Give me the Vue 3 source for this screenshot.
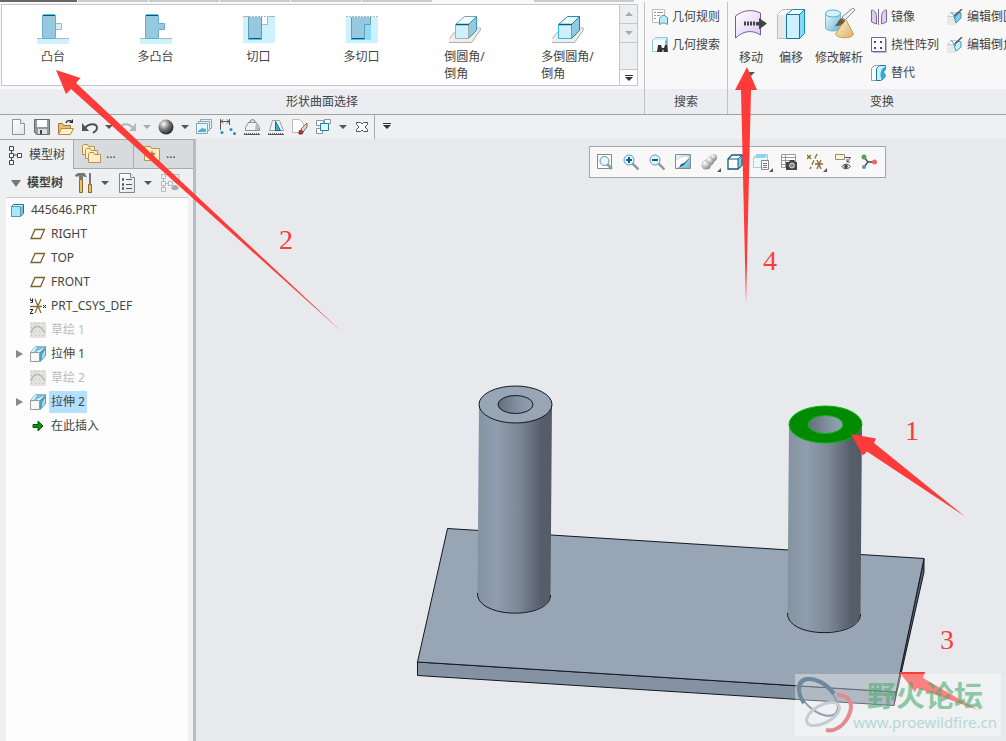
<script setup>
const shapes = [
  { icon: 'boss', lines: ['凸台'] },
  { icon: 'multi-boss', lines: ['多凸台'] },
  { icon: 'cut', lines: ['切口'] },
  { icon: 'multi-cut', lines: ['多切口'] },
  { icon: 'round', lines: ['倒圆角/', '倒角'] },
  { icon: 'multi-round', lines: ['多倒圆角/', '倒角'] },
]
const searches = [
  { icon: 'rule', label: '几何规则' },
  { icon: 'find', label: '几何搜索' },
]
const transforms = [
  { icon: 'move', label: '移动', menu: true, size: 'narrow' },
  { icon: 'offset', label: '偏移', size: 'narrow' },
  { icon: 'analytic', label: '修改解析', size: 'wide' },
]
const patterns = [
  { icon: 'mirror', label: '镜像' },
  { icon: 'flex', label: '挠性阵列' },
  { icon: 'replace', label: '替代' },
]
const edits = [
  { icon: 'edit-round', label: '编辑倒圆角' },
  { icon: 'edit-chamfer', label: '编辑倒角' },
]
const quick = [
  { icon: 'new', name: '新建' },
  { icon: 'save', name: '保存' },
  { icon: 'open', name: '打开' },
  { icon: 'undo', name: '撤销', menu: true },
  { icon: 'redo', name: '重做', menu: true, off: true },
  { icon: 'sphere', name: '外观', menu: true },
  { icon: 'layers', name: '图层' },
  { icon: 'measure', name: '测量' },
  { icon: 'mass', name: '质量' },
  { icon: 'section', name: '截面' },
  { icon: 'erase', name: '拭除' },
  { icon: 'windows', name: '窗口', menu: true },
  { icon: 'close', name: '关闭' },
]
const views = [
  { icon: 'refit', name: '重新调整' },
  { icon: 'zoom-in', name: '放大' },
  { icon: 'zoom-out', name: '缩小' },
  { icon: 'repaint', name: '重画' },
  { icon: 'shade', name: '显示样式', menu: true },
  { icon: 'cube', name: '视图方向' },
  { icon: 'saved', name: '已保存方向', menu: true, spaced: true },
  { icon: 'manager', name: '视图管理器' },
  { icon: 'datum', name: '基准显示', menu: true, spaced: true },
  { icon: 'notes', name: '注释显示' },
  { icon: 'spin', name: '旋转中心' },
]
const tree = [
  { icon: 'plane', label: 'RIGHT' },
  { icon: 'plane', label: 'TOP' },
  { icon: 'plane', label: 'FRONT' },
  { icon: 'csys', label: 'PRT_CSYS_DEF' },
  { icon: 'sketch', label: '草绘 1', off: true },
  { icon: 'extrude', label: '拉伸 1', branch: true },
  { icon: 'sketch', label: '草绘 2', off: true },
  { icon: 'extrude', label: '拉伸 2', branch: true, selected: true },
  { icon: 'insert', label: '在此插入' },
]
</script>

<template>
  <div class="app">
    <svg class="library" aria-hidden="true">
      <defs>
        <linearGradient id="g-sky" x1="0" y1="0" x2="1" y2="1">
          <stop offset="0" stop-color="#f2fcff" /><stop offset="1" stop-color="#62b4d6" />
        </linearGradient>
        <linearGradient id="g-violet" x1="0" y1="0" x2="1" y2="1">
          <stop offset="0" stop-color="#fff" /><stop offset="1" stop-color="#d9c9f0" />
        </linearGradient>
        <linearGradient id="g-sand" x1="0" y1="0" x2="1" y2="1">
          <stop offset="0" stop-color="#fff4d6" /><stop offset="1" stop-color="#dcb163" />
        </linearGradient>
        <linearGradient id="g-paper" x1="0" y1="0" x2="1" y2="1">
          <stop offset="0" stop-color="#fff" /><stop offset="1" stop-color="#dfe5e9" />
        </linearGradient>
        <radialGradient id="g-ball" cx=".35" cy=".3" r=".75">
          <stop offset="0" stop-color="#fff" /><stop offset=".5" stop-color="#777" /><stop offset="1" stop-color="#222" />
        </radialGradient>
        <radialGradient id="g-pale" cx=".35" cy=".3" r=".75">
          <stop offset="0" stop-color="#fff" /><stop offset="1" stop-color="#888" />
        </radialGradient>
      </defs>

      <symbol id="boss" viewBox="0 0 32 30">
        <path fill="#cdf2fd" d="M0 25h32v5H0zM19 9h6v7h-6z" />
        <path fill="none" stroke="#b3b3b3" d="M0 24.500h5M19 24.500h13M19 9.500h5.500v6H19" />
        <path fill="#96c8df" stroke="#68aeca" d="M5.500 1.500h13v23h-13z" />
        <path fill="#52c3ee" d="M6 0h12v1H6z" /><path fill="#0d5877" d="M6 1h12v1H6z" />
      </symbol>
      <symbol id="multi-boss" viewBox="0 0 32 30">
        <path fill="#cdf2fd" d="M0 25h32v5H0z" />
        <path fill="none" stroke="#b3b3b3" d="M0 24.500h5M19 24.500h13" />
        <path fill="#96c8df" stroke="#68aeca" d="M5.500 1.500h13v8h6v6h-6v9h-13z" />
        <path fill="#52c3ee" d="M6 0h12v1H6z" /><path fill="#0d5877" d="M6 1h12v1H6z" />
      </symbol>
      <symbol id="cut" viewBox="0 0 32 30">
        <path fill="#cdf2fd" d="M0 3h32v26H0z" /><path fill="#fff" d="M19 2h6v8h-6z" />
        <path fill="none" stroke="#b3b3b3" d="M0 2.500h6M19 10.500h5.500V2.500H32" />
        <path stroke="#b3b3b3" stroke-dasharray="2 1" d="M6 2.500h18" />
        <path fill="#96c8df" d="M5 3h14v23H5z" /><path fill="none" stroke="#5d9db8" d="M5.500 3v22.500M18.500 3v22.500" />
        <path fill="#52c3ee" d="M6 25h12v1H6z" /><path fill="#0d5877" d="M6 24h12v1H6z" />
      </symbol>
      <symbol id="multi-cut" viewBox="0 0 32 30">
        <path fill="#cdf2fd" d="M0 3h32v26H0z" /><path fill="#8edcf9" d="M18 11h7v15h-7z" />
        <path stroke="#b3b3b3" stroke-dasharray="2 1" d="M0 2.500h32" />
        <path fill="#96c8df" d="M5 3h20v8h-6v15H5z" /><path fill="none" stroke="#5d9db8" d="M5.500 3v22.500M24.500 3v7.500h-6v15" />
        <path fill="#52c3ee" d="M6 25h12v1H6z" /><path fill="#0d5877" d="M6 24h12v1H6z" />
      </symbol>
      <symbol id="round" viewBox="0 0 32 30">
        <path fill="#eee" d="M0 25l8-10h24v2l-9 12H0z" />
        <path fill="none" stroke="#b0b0b0" d="M6 17.500L.5 24.500M0 28.500h22.500L31.500 15.500v-1.500H27" />
        <path fill="#f1fcff" stroke="#6aa9c2" d="M6.500 10.500l9-8h12l-8 8z" />
        <path fill="#93c9e0" stroke="#3a96ba" d="M19.500 10.500l8-8v14l-8 8z" />
        <path fill="#cdf2fd" stroke="#aaa" d="M6.500 10.500h13v14h-13z" />
        <path stroke="#0d5877" stroke-width="1.500" d="M7 10.500h13" />
      </symbol>
      <symbol id="multi-round" viewBox="0 0 32 30">
        <path fill="#eee" d="M0 25l8-10h24v2l-9 12H0z" />
        <path fill="none" stroke="#b0b0b0" d="M6 17.500L.5 24.500M0 28.500h22.500L31.500 15.500v-1.500H27" />
        <path fill="#f1fcff" stroke="#1790bd" d="M6.500 10.500l9-8h12l-8 8z" />
        <path fill="#93c9e0" stroke="#1581ad" d="M19.500 10.500l8-8v14l-8 8z" />
        <path fill="#cdf2fd" stroke="#2cb3e5" d="M6.500 10.500h13v14h-13z" />
        <path stroke="#0d5877" stroke-width="1.500" d="M7 10.500h13" />
      </symbol>

      <symbol id="rule" viewBox="0 0 16 16">
        <path fill="#fff" stroke="#bbb" d="M.5.500h12v13H.5z" />
        <path fill="none" stroke="#999" d="M2 3.500h2M2 6.500h2M2 9.500h2M5 3.500h6M5 6.500h3" />
        <path fill="#bdeafb" stroke="#4a93b0" d="M7.500 15.500v-5c1-5 5-5 8-2v7c-3-2-5-2-8 0z" />
      </symbol>
      <symbol id="find" viewBox="0 0 16 16">
        <path fill="#fff" stroke="#8cc5dc" d="M.5 3.500l3-3h12v11l-3 3H.5z" />
        <path fill="#d3f2fd" d="M1 3l3-2h11l-2 2z" /><path fill="#71bcdb" d="M13 4l2-3v10l-2 2z" />
        <path fill="#333" d="M5 15l1-7h3l1 3h2l1-3h2l1 7h-4l-1-3-1 3z" />
      </symbol>
      <symbol id="move" viewBox="0 0 32 32">
        <path fill="url(#g-violet)" stroke="#7a57a3" d="M.5 8C8 2 17 1 25.500 5v22C18 22 9 22 .5 30z" />
        <path stroke="#444" stroke-width="4" stroke-dasharray="2 1" d="M9 15.500h12" />
        <path fill="#444" d="M21 14h3v-4l8 5.500-8 6v-4h-3z" />
      </symbol>
      <symbol id="offset" viewBox="0 0 32 32">
        <path fill="#fff" stroke="#bbb" d="M2.500 6.500l5-5h11l-6 5v24h-10z" /><path fill="#e9e9e9" d="M3 7h8v23H3z" />
        <path fill="#f2fcff" stroke="#1588b6" d="M11.500 6.500l6-5h12l-5 5z" />
        <path fill="#86d8f5" stroke="#1588b6" d="M24.500 6.500l5-5v24l-5 5z" />
        <path fill="#cdf2fd" stroke="#11789f" d="M11.500 6.500h13v24h-13z" />
      </symbol>
      <symbol id="analytic" viewBox="0 0 32 32">
        <path fill="url(#g-sky)" stroke="#77b9d2" d="M2.500 5v15c1 4 14 4 15 0V5z" />
        <ellipse cx="10" cy="5.500" rx="7.500" ry="3.500" fill="#d5f2fc" stroke="#63aac6" />
        <path fill="url(#g-sand)" stroke="#c59b55" d="M22.500 11l8 15c-1 5-16 5-18 0z" />
        <path fill="#f2f2f2" stroke="#888" d="M19 9L30 0l2 2-10 10z" />
        <path fill="#6d5b43" d="M11 18c4-1 3-6 8-8l3 3c-3 5-7 5-11 5z" />
      </symbol>
      <symbol id="mirror" viewBox="0 0 16 16">
        <path fill="#dccff0" stroke="#8062ab" d="M.5 1c3 0 5 3 5 7v7l-5-2zM15.500 1c-3 0-5 3-5 7v7l5-2z" />
        <path stroke="#777" d="M7.500 0v16" />
      </symbol>
      <symbol id="flex" viewBox="0 0 16 16">
        <path fill="#fff" stroke="#7d5ba7" d="M.5.500h14v14H.5z" />
        <path fill="#5c4380" d="M3 4h2v2H3zM9 4h2v2H9zM3 10h2v2H3zM9 10h2v2H9z" />
        <path fill="none" stroke="#bbb" d="M15.500 2v13.500H2" />
      </symbol>
      <symbol id="replace" viewBox="0 0 16 16">
        <path fill="#fff" stroke="#999" d="M.5 3.500l3-3h5v12l-3 3h-5z" />
        <path fill="#c8effc" stroke="#157ba5" d="M5.500 3.500l3-3h6v4c-3 2-2 4 0 6-1 3-3 4-5 5h-4z" />
        <path fill="#33a7d5" d="M11 4l4-3v3c-3 2-2 4 0 6l-4 5c-2-4-2-6 0-11z" />
      </symbol>
      <symbol id="edit-round" viewBox="0 0 16 16">
        <path fill="#e9e9e9" d="M0 7h9v9H0z" /><path fill="#fff" stroke="#ccc" d="M.5 7.500l4-4h5v4z" />
        <path fill="#7fcdea" stroke="#3997bd" d="M7 8c0-4 4-5 7-4v5l-5 5z" />
        <path stroke="#555" stroke-width="1.500" d="M8 7l7-7" /><path stroke="#2f92bb" d="M4 3l5 6" />
      </symbol>
      <symbol id="edit-chamfer" viewBox="0 0 16 16">
        <path fill="#e9e9e9" d="M0 7h9v9H0z" /><path fill="#fff" stroke="#ccc" d="M.5 7.500l4-4h5v4z" />
        <path fill="#c8effc" stroke="#3997bd" d="M7 8l3-4 4 1v5l-5 4z" />
        <path stroke="#555" stroke-width="1.500" d="M8 7l7-7" /><path stroke="#2f92bb" d="M4 3l5 6" />
      </symbol>

      <symbol id="new" viewBox="0 0 16 16">
        <path fill="url(#g-paper)" stroke="#8d9396" d="M2.500.500h8l4 4v11h-12z" />
        <path fill="#fff" stroke="#8d9396" d="M10.500.500v4h4" />
      </symbol>
      <symbol id="save" viewBox="0 0 16 16">
        <path fill="#93989c" stroke="#666b6f" d="M.5.500h15v15h-13l-2-2z" />
        <path fill="#fff" d="M3 1h10v7H3z" /><path fill="#dfe2e4" d="M4 10h9v5H4z" />
        <path fill="#444" d="M6 11h2v4H6z" />
      </symbol>
      <symbol id="open" viewBox="0 0 16 16">
        <path fill="#e8bf76" stroke="#a8782b" d="M.5 14.500v-10h4l1 2h7v3" />
        <path fill="#fff0cb" stroke="#b98737" d="M.5 15.500l3-6h12l-3 6z" />
        <path fill="none" stroke="#333" stroke-width="1.500" d="M8 4c1-3 4-3 6-1" /><path fill="#333" d="M11 4h4V0z" />
      </symbol>
      <symbol id="undo" viewBox="0 0 16 16">
        <path fill="none" stroke="#4c5257" stroke-width="2" d="M3 9c4-5 12-5 12 0 0 2-1 3-4 5" />
        <path fill="#4c5257" d="M0 4v8h7z" />
      </symbol>
      <symbol id="redo" viewBox="0 0 16 16">
        <path fill="none" stroke="#b4b8bb" stroke-width="2" d="M13 9C9 4 1 4 1 9c0 2 1 3 4 5" />
        <path fill="#b4b8bb" d="M16 4v8H9z" />
      </symbol>
      <symbol id="sphere" viewBox="0 0 16 16"><circle cx="8" cy="8" r="7.500" fill="url(#g-ball)" /></symbol>
      <symbol id="layers" viewBox="0 0 16 16">
        <path fill="#e3f3fa" stroke="#8aa6b3" d="M4.500.500h11v9h-11z" />
        <path fill="#e3f3fa" stroke="#8aa6b3" d="M2.500 2.500h11v9h-11z" />
        <path fill="#e8f7fd" stroke="#8aa6b3" d="M.5 4.500h11v10H.5z" /><path fill="#58aed0" d="M2 12l4-3 4 1v3H2z" />
      </symbol>
      <symbol id="measure" viewBox="0 0 16 16">
        <path fill="none" stroke="#555" d="M.5 0v11M9.500 0v6M1 2.500h8M3 .500l-2 2 2 2M7 .500l2 2-2 2" />
        <g fill="#1893cb"><circle cx="2" cy="13.500" r="1.500" /><circle cx="11" cy="10.500" r="1.500" /><circle cx="14.500" cy="14.500" r="1.500" /></g>
      </symbol>
      <symbol id="mass" viewBox="0 0 16 16">
        <path fill="none" stroke="#666" d="M6 3c0-3 5-3 5 0" />
        <path fill="#f0f3f4" stroke="#8a9296" d="M1.500 11.500v-3l3-5h8l3 5v3z" /><path fill="#b5bdc2" d="M11 11l1-7 3 5v2z" />
        <path stroke="#555" d="M0 15.500h16" /><path stroke="#666" stroke-dasharray="1 1" d="M0 14.500h16" />
      </symbol>
      <symbol id="section" viewBox="0 0 16 16">
        <path fill="#f0f3f4" stroke="#9aa2a6" d="M1.500 11.500l3-10h7l4 10z" />
        <path fill="#39b3e4" stroke="#13658a" d="M7.500 2.500v9h5z" />
        <path stroke="#555" d="M0 15.500h16" /><path stroke="#666" stroke-dasharray="1 1" d="M0 14.500h16" />
      </symbol>
      <symbol id="erase" viewBox="0 0 16 16">
        <path fill="#fff" stroke="#bcbcbc" d="M.5.500h7l4 4v9H.5z" />
        <path fill="#e5d7c4" stroke="#74695b" d="M9 10l6-6v4l-4 5z" /><path fill="#b23b3b" stroke="#8c2828" d="M8 11l3 2-1 2H7v-2z" />
      </symbol>
      <symbol id="windows" viewBox="0 0 16 16">
        <path fill="#fff" stroke="#8b9499" d="M.5 1.500h7v5h-7zM8.500.500h6v4h-6zM.5 9.500h6v5h-6z" />
        <path fill="#e5f8ff" stroke="#1582b2" d="M4.500 4.500h8v7h-8z" />
      </symbol>
      <symbol id="close" viewBox="0 0 16 16">
        <path fill="#fff" stroke="#555" d="M2.500 3.500h4L8 5l1.500-1.500h4v2L11 8l2.500 2.500v2h-4L8 11l-1.500 1.500h-4v-2L5 8 2.500 5.500z" />
      </symbol>

      <symbol id="lens" viewBox="0 0 16 16">
        <path stroke="#999" stroke-width="2.500" d="M9.500 9.500l6 6" />
        <circle cx="6" cy="6" r="5" fill="#e7f7fd" stroke="#5a9cb8" />
      </symbol>
      <symbol id="refit" viewBox="0 0 16 16">
        <path fill="#fff" stroke="#888" d="M.5.500h14v14H.5z" /><path stroke="#999" stroke-width="2.500" d="M10 10l5 5" />
        <circle cx="7.500" cy="7" r="4.500" fill="#e7f7fd" stroke="#4a94b4" />
      </symbol>
      <symbol id="zoom-in" viewBox="0 0 16 16">
        <use href="#lens" /><path stroke="#08628e" stroke-width="2" d="M3 6h6M6 3v6" />
      </symbol>
      <symbol id="zoom-out" viewBox="0 0 16 16">
        <use href="#lens" /><path stroke="#08628e" stroke-width="2" d="M3 6h6" />
      </symbol>
      <symbol id="repaint" viewBox="0 0 16 16">
        <path fill="url(#g-sky)" stroke="#888" d="M.5.500h15v14H.5z" /><path fill="#fff" d="M1 7C5 3 10 2 14 3L7 12l-6 2z" />
        <path fill="#1f6789" d="M15 4l-6 7-5 3 2-4 3-1z" />
      </symbol>
      <symbol id="shade" viewBox="0 0 16 16">
        <path fill="#aaa" d="M8 3l5-3 3 4-4 6z" /><circle cx="12.500" cy="3.500" r="3.500" fill="url(#g-pale)" />
        <path fill="#bbb" d="M1 8l5-3 6 4-3 6H4z" /><circle cx="9" cy="7" r="4" fill="url(#g-pale)" /><circle cx="5" cy="11" r="4.500" fill="url(#g-pale)" />
      </symbol>
      <symbol id="cube" viewBox="0 0 16 16">
        <path fill="#fff" stroke="#11597d" stroke-width="1.300" d="M1 5l4-4h10v10l-4 4H1z" />
        <path fill="#8bc8df" stroke="#11597d" d="M11 5l4-4v10l-4 4z" /><path fill="none" stroke="#11597d" d="M1 5h10" />
      </symbol>
      <symbol id="saved" viewBox="0 0 16 16">
        <path fill="#ecfaff" stroke="#9bd1e5" d="M.5 3.500l3-3h11v9l-3 4H.5z" /><path fill="#8fd3ed" d="M4 1h11l-3 3H1z" />
        <path fill="#fff" stroke="#888" d="M8.500 6.500h7v9h-7z" /><path stroke="#777" d="M10 9.500h4M10 11.500h4M10 13.500h4" />
      </symbol>
      <symbol id="manager" viewBox="0 0 16 16">
        <path fill="#fff" stroke="#999" d="M.5.500h14v13H.5z" /><path fill="none" stroke="#999" d="M.5 3.500h14M.5 6.500h14M.5 10.500h14M4.500.500v13" />
        <path fill="#444" d="M5 8h3l1-2h4l1 2h2v8H5z" /><circle cx="11" cy="11.500" r="2.500" fill="#888" stroke="#ddd" />
      </symbol>
      <symbol id="datum" viewBox="0 0 16 16">
        <path fill="none" stroke="#8a6b2f" stroke-width="1.300" d="M0 1l4 4M4 1L0 5M8 10h8M10 6l4 9M14 6l-4 9" />
        <path fill="none" stroke="#8a6b2f" stroke-width="1.300" stroke-dasharray="5 2" d="M10 0L3 15" />
      </symbol>
      <symbol id="notes" viewBox="0 0 16 16">
        <path fill="#fff4d7" stroke="#9b9074" d="M.5.500h9v5h-9z" /><path fill="none" stroke="#555" d="M10 3.500h5.500L12 8M12 5v3h3" />
        <path fill="#eee" stroke="#444" d="M7 12.500c2-3 6-3 8.500 0-2.500 3-6.500 3-8.500 0z" /><circle cx="11" cy="12.500" r="1.800" fill="#444" />
      </symbol>
      <symbol id="spin" viewBox="0 0 16 16">
        <path fill="none" stroke="#444" stroke-width="1.300" d="M3 3l4 5-4 5M7 8h6" />
        <circle cx="3" cy="3" r="2.500" fill="#5c9f5c" /><circle cx="3" cy="13" r="2" fill="#4d9ac1" /><circle cx="13.500" cy="8" r="2.500" fill="#de6d6d" />
      </symbol>

      <symbol id="tree" viewBox="0 0 16 20">
        <path fill="none" stroke="#444" d="M3.500 5v10M4 10h7" />
        <path fill="#fff" stroke="#444" d="M1.500 1.500h4v4h-4zM1.500 8.500h4v4h-4zM1.500 15.500h4v4h-4zM9.500 8.500h4v4h-4z" />
      </symbol>
      <symbol id="folders" viewBox="0 0 20 20">
        <path id="folder" fill="#ffeec4" stroke="#b8924f" d="M.5 10.500v-9l1-1h4l1 2h6v8z" />
        <use href="#folder" x="3" y="4" /><use href="#folder" x="6" y="8" />
      </symbol>
      <symbol id="favorites" viewBox="0 0 20 20">
        <path fill="#ffeec4" stroke="#b8924f" d="M2.500 16.500v-14h6l1 2h8v12z" /><path fill="#b18030" d="M10 6l1 3h3l-2 2 1 3-3-2-3 2 1-3-2-2h3z" />
      </symbol>
      <symbol id="tools" viewBox="0 0 18 20">
        <path fill="#e6c075" stroke="#91662a" d="M4.500 6.500h3v13h-3zM13.500 11.500h3v8h-3z" />
        <path fill="#777" d="M0 2l3-2h7v1l2 3h-2L8 3v3H4V3L1 4zM14 0h2v11h-2z" />
      </symbol>
      <symbol id="settings" viewBox="0 0 16 20">
        <path fill="url(#g-paper)" stroke="#7f878b" d="M.5.500h11l4 4v15H.5z" /><path fill="#fff" stroke="#7f878b" d="M11.500.500v4h4" />
        <path stroke="#555" d="M7 6.500h6M7 11.500h6M7 15.500h6" /><path fill="none" stroke="#555" d="M3.500 5.500h1v2h-1zM3.500 10.500h1v2h-1zM3.500 14.500h1v2h-1z" />
      </symbol>
      <symbol id="filter" viewBox="0 0 20 20">
        <path fill="none" stroke="#b8b8b8" d="M1.500 1.500h4v4h-4zM1.500 8.500h4v4h-4zM1.500 14.500h4v4h-4zM8.500 8.500h4v4h-4zM8 1.500h11v10M6 10.500h2M3.500 6v2M3.500 13v1" />
        <path fill="#aaa" d="M11 15c2-4 6-4 8 0-2 3-6 3-8 0z" />
      </symbol>
      <symbol id="part" viewBox="0 0 16 16">
        <path fill="#e5f8ff" stroke="#236f90" d="M1.500 4.500l2-2h10v9l-3 3h-9z" /><path fill="#6fc5e4" d="M11 5l2-2v8l-2 3z" />
        <path fill="#a9e8fb" stroke="#5699b4" d="M1.500 4.500h9v10h-9z" />
      </symbol>
      <symbol id="plane" viewBox="0 0 16 16">
        <path fill="#fff" stroke="#7d6130" stroke-width="1.300" d="M1 12.500l4-9h9.500l-4 9z" />
      </symbol>
      <symbol id="csys" viewBox="0 0 16 16">
        <path fill="none" stroke="#8a6b35" stroke-width="1.300" d="M0 8.500h12M5 1l6 14M11 1L5 15" />
        <path fill="none" stroke="#222" d="M.5.500v2h2v-2M2.500 2v2.500h-2M0 11.500h3l-3 4h3.500M13 7l3 3M16 7l-3 3" />
      </symbol>
      <symbol id="sketch" viewBox="0 0 16 16">
        <path fill="#e1e1e1" d="M0 0h16v16H0z" />
        <path stroke="#c3c3c3" stroke-dasharray="1 3" d="M1 1.500h15M1 5.500h15M1 9.500h15M1 13.500h15" />
        <path fill="none" stroke="#bdbba5" stroke-width="1.500" d="M1 11C4 2 10 2 15 11" />
      </symbol>
      <symbol id="extrude" viewBox="0 0 16 16">
        <path fill="#e3f6fd" stroke="#86b9cd" d="M.5 6.500l5-6h10v9l-5 6z" />
        <path fill="#7fbdd7" d="M6 6l9-5H7L4 6z" /><path fill="#4f9fc3" d="M10 6l6-6v9l-6 7z" /><path fill="#b6e0f1" d="M12 9l3-5v5l-3 4z" />
        <path fill="#f8f8f8" stroke="#999" d="M.5 6.500h9v9h-9z" />
      </symbol>
      <symbol id="insert" viewBox="0 0 16 16">
        <path fill="#079407" stroke="#184d12" d="M3 6.500h5V3l5 5-5 5V9.500H3z" />
      </symbol>
    </svg>

    <div class="tab-strip">
      <i class="strip dark"></i><i v-for="n in 5" :key="n" class="strip"></i>
      <i class="strip current"></i><i class="strip last"></i>
    </div>

    <header class="ribbon">
      <section class="group group-shape">
        <div class="group-body">
          <div class="gallery">
            <button v-for="s in shapes" :key="s.icon" class="shape" type="button">
              <svg class="shape-icon"><use :href="'#' + s.icon" /></svg>
              <span class="shape-label"><span v-for="l in s.lines" :key="l">{{ l }}</span></span>
            </button>
            <div class="scroller">
              <button type="button" aria-label="上一行"><i class="caret up faint"></i></button>
              <button type="button" aria-label="下一行"><i class="caret faint"></i></button>
              <span class="filler"></span>
              <button class="more" type="button" aria-label="更多"><i class="caret barred"></i></button>
            </div>
          </div>
        </div>
        <h2 class="group-title">形状曲面选择</h2>
      </section>

      <section class="group group-search">
        <div class="group-body column">
          <button v-for="s in searches" :key="s.icon" class="row-button" type="button">
            <svg class="icon"><use :href="'#' + s.icon" /></svg>{{ s.label }}
          </button>
        </div>
        <h2 class="group-title">搜索</h2>
      </section>

      <section class="group group-transform">
        <div class="group-body">
          <button v-for="t in transforms" :key="t.icon" class="large" :class="t.size" type="button">
            <svg class="large-icon"><use :href="'#' + t.icon" /></svg>
            <span>{{ t.label }}</span>
            <i v-if="t.menu" class="caret"></i>
          </button>
          <div class="column patterns">
            <button v-for="p in patterns" :key="p.icon" class="row-button" type="button">
              <svg class="icon"><use :href="'#' + p.icon" /></svg>{{ p.label }}
            </button>
          </div>
          <div class="column">
            <button v-for="e in edits" :key="e.icon" class="row-button" type="button">
              <svg class="icon"><use :href="'#' + e.icon" /></svg>{{ e.label }}
            </button>
          </div>
        </div>
        <h2 class="group-title">变换</h2>
      </section>
    </header>

    <nav class="quick">
      <template v-for="q in quick" :key="q.icon">
        <button class="quick-button" type="button" :aria-label="q.name"><svg class="icon"><use :href="'#' + q.icon" /></svg></button>
        <button v-if="q.menu" class="quick-menu" type="button" :aria-label="q.name + '选项'"><i class="caret" :class="{ faint: q.off }"></i></button>
      </template>
      <button class="customize" type="button" aria-label="自定义快速访问工具栏"><i class="caret barred"></i></button>
    </nav>

    <div class="work">
      <aside class="panel">
        <div class="tabs">
          <button class="tab active" type="button"><svg class="tree-icon"><use href="#tree" /></svg>模型树</button>
          <button class="tab" type="button"><svg class="tab-icon"><use href="#folders" /></svg>...</button>
          <button class="tab" type="button"><svg class="tab-icon"><use href="#favorites" /></svg>...</button>
        </div>
        <div class="panel-bar">
          <i class="caret big"></i><strong>模型树</strong>
          <button type="button" aria-label="工具"><svg class="tab-icon"><use href="#tools" /></svg><i class="caret"></i></button>
          <button type="button" aria-label="设置"><svg class="tab-icon"><use href="#settings" /></svg><i class="caret"></i></button>
          <button type="button" aria-label="过滤"><svg class="tab-icon"><use href="#filter" /></svg></button>
        </div>
        <ul class="model-tree">
          <li class="root"><svg class="icon"><use href="#part" /></svg><span>445646.PRT</span></li>
          <li v-for="n in tree" :key="n.label" :class="{ off: n.off, selected: n.selected }">
            <button v-if="n.branch" class="expander" type="button" :aria-label="'展开 ' + n.label"></button>
            <i v-else class="no-expander"></i>
            <svg class="icon"><use :href="'#' + n.icon" /></svg><span>{{ n.label }}</span>
          </li>
        </ul>
      </aside>

      <main class="viewport">
        <svg class="model" width="810" height="602" viewBox="196 139 810 602" role="img" aria-label="零件模型">
          <defs>
            <linearGradient id="g-side">
              <stop offset="0" stop-color="#8493a0" /><stop offset=".25" stop-color="#909daf" />
              <stop offset=".55" stop-color="#7d8995" /><stop offset=".85" stop-color="#565e69" /><stop offset="1" stop-color="#555c67" />
            </linearGradient>
            <linearGradient id="g-hole">
              <stop offset="0" stop-color="#666f7a" /><stop offset=".7" stop-color="#8997a7" /><stop offset="1" stop-color="#929fae" />
            </linearGradient>
          </defs>
          <g stroke="#111820" stroke-linejoin="round">
            <path fill="#5c6673" d="M924 559v13l-30 133 2-13z" />
            <path fill="#8492a1" d="M417.500 662L896 692l-2 13.500-476.500-30z" />
            <path fill="#98a5b5" d="M447.500 528.500l476.500 30L896 692l-478.500-30z" />
          </g>
          <path fill="url(#g-side)" d="M479 404l-1.500 191c1 24 71 24 73 0L552 404z" />
          <path fill="none" stroke="#111820" d="M477.500 593c-1 26 73 27 73 2" />
          <ellipse cx="515.500" cy="404.500" rx="36.500" ry="18.500" fill="#98a5b5" stroke="#111820" />
          <ellipse cx="515.500" cy="404.500" rx="17.500" ry="9" fill="url(#g-hole)" stroke="#111820" />
          <path fill="url(#g-side)" d="M789 424l-1.500 190c1 24 71 24 73 0L862 424z" />
          <path fill="none" stroke="#111820" d="M787.500 613c-1 26 73 26 73 1" />
          <ellipse cx="825.500" cy="424.500" rx="36.500" ry="18.500" fill="#008a00" stroke="#00b80a" />
          <ellipse cx="825.500" cy="424.500" rx="17.500" ry="9" fill="url(#g-hole)" stroke="#10b41a" />
        </svg>
        <div class="view-bar">
          <button v-for="v in views" :key="v.icon" :class="{ menu: v.menu, spaced: v.spaced }" type="button" :aria-label="v.name">
            <svg class="icon"><use :href="'#' + v.icon" /></svg>
          </button>
        </div>
      </main>
    </div>

    <svg class="notes" width="1006" height="741" viewBox="0 0 1006 741">
      <path d="M56 70l24.500 8-4.500 5 266 249L71 89l-5 5zM747 67l10 23h-6l-5 214-5-214h-6zM851 434l25 4.500-2 4.500 91 73.500-98-65-4 4zM899 672h26l-2 6 55 32-61-22-2 4z" />
      <text x="905" y="440">1</text><text x="279" y="249">2</text><text x="940" y="649">3</text><text x="763" y="270">4</text>
    </svg>

    <div class="watermark">
      <svg class="rings" viewBox="0 0 60 62" fill="none">
        <ellipse cx="23" cy="23" rx="24" ry="13" transform="rotate(42 23 23)" stroke="#8fa0ae" stroke-width="2" />
        <path stroke="#6e889f" stroke-width="4" d="M9 29C2 19 2 7 12 5c9-1 20 5 27 15" />
        <ellipse cx="28" cy="40" rx="18" ry="9" transform="rotate(-28 28 40)" stroke="#c5cdd4" stroke-width="3" />
        <path stroke="#e28b92" stroke-width="4" d="M42 21c12-1 17 9 12 20C49 52 40 58 31 56" />
      </svg>
      <p class="forum">野火论坛</p>
      <p class="site">www.proewildfire.cn</p>
    </div>
  </div>
</template>

<style>
body { margin: 0; background: #e8e9ed; }
</style>

<style scoped>
.app {
  position: relative; display: flex; flex-direction: column; min-height: 100vh; overflow: hidden;
  font: 12px/16px "Noto Sans", "Noto Sans CJK SC", sans-serif; color: #444; background: #eef0f2;
}
.library { position: absolute; width: 0; height: 0; }
button { display: flex; align-items: center; margin: 0; padding: 0; border: 0; background: none; font: inherit; color: inherit; }
h2, p, ul { margin: 0; padding: 0; font-weight: 400; }
svg { display: block; flex: none; }
.icon { width: 16px; height: 16px; }
.caret { flex: none; width: 0; height: 0; border: 4px solid transparent; border-top-color: #555; border-bottom: 0; }
.caret.up { border-top: 0; border-bottom: 4px solid #aaa; }
.caret.faint { border-top-color: #aaa; }
.caret.big { border-width: 7px 5px 0; border-top-color: #777; }
.caret.barred { position: relative; border-top-color: #333; }
.caret.barred::before { content: ""; position: absolute; left: -4px; top: -6px; width: 8px; height: 1px; background: #333; }

.tab-strip { display: flex; gap: 1px; height: 2px; background: #f8f8f8; }
.strip { width: 70px; background: #c9cbcd; }
.strip.dark { width: 77px; background: #6b6663; }
.strip.current { width: 100px; background: #f8f8f8; }
.strip.last { width: 100px; }

.ribbon { display: flex; background: #f8f8f8; border-bottom: 1px solid #a2a2a2; }
.group { display: flex; flex: none; flex-direction: column; border-right: 1px solid #bfc1c3; }
.group-body { display: flex; height: 87px; }
.group-body.column, .column { display: flex; flex-direction: column; }
.group-title { text-align: center; font-size: 12px; line-height: 25px; background: #ecedf0; }
.group-shape { width: 644px; }
.gallery { display: flex; margin: 2px 5px 3px 1px; border: 1px solid #c5c8ca; background: #fff; }
.shape { flex-direction: column; width: 103px; padding-top: 9px; }
.shape:first-child { width: 102px; }
.shape-icon { width: 32px; height: 30px; }
.shape-label { display: flex; flex-direction: column; align-items: flex-start; margin-top: 4px; line-height: 17px; }
.scroller { display: flex; flex-direction: column; gap: 1px; width: 17px; border-left: 1px solid #c5c8ca; background: #c5c8ca; }
.scroller button, .filler { justify-content: center; height: 18px; background: #eceef0; }
.scroller .filler { flex: 1; }
.scroller .more { height: 15px; padding-top: 2px; background: #fff; }
.group-search { width: 82px; }
.row-button { gap: 4px; height: 28px; white-space: nowrap; }
.group-search .row-button { padding-left: 7px; }
.column .row-button:first-child { margin-top: 1px; }
.group-transform { width: 308px; }
.large { flex-direction: column; padding-top: 6px; }
.large.narrow { width: 40px; }
.large.narrow:first-child { margin-left: 3px; }
.large.wide { width: 56px; }
.large-icon { width: 32px; height: 32px; }
.large span { margin: 10px 0 6px; white-space: nowrap; }
.patterns { width: 76px; padding-left: 4px; }

.quick { display: flex; align-items: center; height: 24px; padding-left: 6px; }
.quick-button { justify-content: center; width: 24px; }
.quick-menu { justify-content: center; width: 14px; }
.customize { justify-content: center; width: 24px; height: 24px; border-left: 1px solid #aaa; }

.work { display: flex; flex: 1; }
.panel { display: flex; flex: none; flex-direction: column; box-sizing: border-box; width: 196px; border-top: 1px solid #aaa; border-right: 3px solid #b9bbbe; }
.tabs { display: flex; height: 29px; }
.tab { flex: 1; gap: 4px; padding-left: 8px; border: 1px solid #aaa; border-width: 0 0 1px 1px; background: #d8dadd; }
.tab.active { flex: none; gap: 5px; box-sizing: border-box; width: 73px; border: 0; background: none; }
.tree-icon { width: 16px; height: 20px; }
.tab-icon { width: 20px; height: 20px; }
.panel-bar { display: flex; align-items: center; gap: 6px; height: 28px; padding-left: 11px; }
.panel-bar button { gap: 7px; margin-left: 2px; }
.panel-bar button:first-of-type { margin-left: 5px; }
.model-tree { flex: 1; margin: 0 5px 0 6px; border-top: 1px solid #ccc; background: #fdfdfd; list-style: none; }
.model-tree li { display: flex; align-items: center; height: 24px; padding-left: 10px; }
.model-tree .root { padding-left: 4px; }
.model-tree span { padding: 3px 2px; margin-left: 3px; white-space: nowrap; }
.off span { color: #bbb; }
.selected span { background: #b3e1ff; }
.expander { width: 0; height: 0; margin-right: 7px; border: 4px solid transparent; border-left: 7px solid #888; border-right: 0; }
.no-expander { width: 14px; }

.viewport { position: relative; flex: 1; min-width: 0; background: #e8e9ed; }
.model { position: absolute; left: 0; top: 0; }
.view-bar { position: absolute; top: 7px; right: 120px; display: flex; padding: 0 3px 0 2px; border: 1px solid #a4a6a8; background: #f8f8f8; }
.view-bar button { position: relative; justify-content: center; width: 26px; height: 30px; }
.view-bar .spaced { margin-right: 2px; }
.view-bar .menu::after { content: ""; position: absolute; right: 1px; bottom: 5px; border: 2px solid #555; border-top-color: transparent; border-left-color: transparent; }

.notes { position: absolute; left: 0; top: 0; pointer-events: none; fill: #fd3b38; font: 28px "Liberation Serif", serif; }
.watermark { position: absolute; right: 5px; bottom: 5px; width: 206px; height: 62px; background: rgba(255, 255, 255, .36); text-align: right; }
.rings { position: absolute; left: 0; top: 0; width: 60px; height: 62px; }
.forum { padding: 2px 18px 0 0; font: 700 29px/36px "Noto Sans CJK SC", sans-serif; color: rgba(76, 171, 112, .62); }
.site { padding-right: 4px; font-size: 15px; line-height: 20px; color: #b5d8d5; }
</style>
